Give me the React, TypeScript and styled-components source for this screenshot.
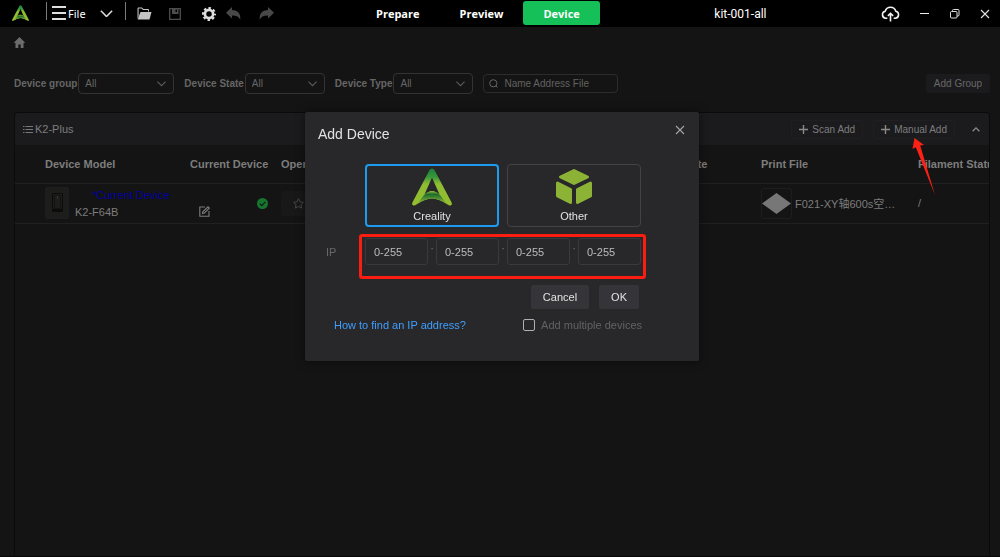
import React from "react";
import styled, { createGlobalStyle } from "styled-components";

const GlobalStyle = createGlobalStyle`
  * { box-sizing: border-box; }
  body {
    margin: 0;
    background: #141414;
    font-family: "Liberation Sans", "Noto Sans CJK SC", Arial, sans-serif;
    font-size: 11px;
    color: #7d7d7d;
  }
  button, input, select { font: inherit; color: inherit; }
  button { border: 0; padding: 0; background: none; cursor: pointer; }
  svg { display: block; flex: none; }
`;

const Page = styled.div`
  display: flex;
  flex-direction: column;
  min-height: 100vh;
  overflow: hidden;
  border-bottom: 1px solid #060606;
`;

/* ---------- title bar ---------- */

const TitleBar = styled.header`
  display: grid;
  grid-template-columns: 356px auto 1fr auto;
  align-items: center;
  height: 27px;
  background: #000;
  color: #fff;
`;

const ToolGroup = styled.div`
  display: flex;
  align-items: center;
  padding-left: 12px;
`;

const Separator = styled.span<{ $gap: number }>`
  width: 1px;
  height: 18px;
  margin: 0 0 6px ${(p) => p.$gap}px;
  background: #7a7a7a;
`;

const ToolButton = styled.button<{ $gap: number }>`
  display: flex;
  align-items: center;
  gap: 2px;
  margin-left: ${(p) => p.$gap}px;
  font-family: "Noto Sans", sans-serif;
  line-height: 16px;
`;

const Tabs = styled.nav`
  display: flex;
`;

const Tab = styled.button<{ $active?: boolean }>`
  height: 24px;
  padding: 0 20px;
  margin-bottom: 1px;
  border-radius: 3px;
  background: ${(p) => (p.$active ? "#15c059" : "transparent")};
  font-family: "Open Sans", sans-serif;
  font-size: 11px;
  font-weight: 700;
`;

const ProjectName = styled.div`
  text-align: center;
  font-family: Roboto, sans-serif;
  font-size: 12px;
`;

const WindowActions = styled.div`
  display: flex;
  align-items: center;
  gap: 20px;
  padding-right: 10px;
`;

/* ---------- filters ---------- */

const Main = styled.main`
  flex: 1;
  display: flex;
  flex-direction: column;
  padding: 10px 10px 0 14px;
`;

const HomeButton = styled.button`
  align-self: flex-start;
  height: 11px;
  color: #6c6c6c;
`;

const Filters = styled.div`
  display: flex;
  align-items: center;
  margin-top: 25px;
  height: 21px;
  font-size: 10px;
`;

const Field = styled.label`
  display: flex;
  align-items: center;
  gap: 1px;
  margin-right: 10px;
  font-weight: 700;
  color: #666;
  white-space: nowrap;
`;

const SelectBox = styled.span<{ $width: number }>`
  position: relative;
  width: ${(p) => p.$width}px;
  height: 21px;

  select {
    width: 100%;
    height: 100%;
    padding: 0 6px;
    appearance: none;
    border: 1px solid #333;
    border-radius: 4px;
    background: transparent;
    font-weight: 400;
  }
  svg {
    position: absolute;
    right: 8px;
    top: 8px;
    pointer-events: none;
  }
`;

const SearchBox = styled.label`
  display: flex;
  align-items: center;
  gap: 6px;
  width: 135px;
  height: 19px;
  padding: 0 5px;
  margin-right: auto;
  border: 1px solid #2c2c2c;
  border-radius: 4px;

  input {
    flex: 1;
    min-width: 0;
    padding: 0;
    border: 0;
    outline: 0;
    background: none;
  }
  input::placeholder { color: #626262; opacity: 1; }
`;

const AddGroupButton = styled.button`
  width: 64px;
  height: 19px;
  border-radius: 2px;
  background: #1b1b1d;
  color: #686868;
`;

/* ---------- device panel ---------- */

const Panel = styled.section`
  flex: 1;
  margin-top: 18px;
  border: 1px solid #0b0b0b;
  border-bottom: 0;
  border-radius: 4px 4px 0 0;
  overflow: hidden;
`;

const PanelHeader = styled.div`
  display: flex;
  align-items: center;
  height: 32px;
  padding: 0 9px 0 8px;
  background: #1b1b1d;
`;

const PanelTitle = styled.h2`
  display: flex;
  align-items: center;
  gap: 2px;
  margin: 0;
  font-size: 11px;
  font-weight: 400;
`;

const PanelActions = styled.div`
  display: flex;
  gap: 10px;
  margin: 0 17px 0 auto;
`;

const PanelButton = styled.button`
  position: relative;
  display: flex;
  align-items: center;
  justify-content: center;
  gap: 4px;
  height: 19px;
  padding: 0 7px;
  border: 1px solid #1f1f21;
  border-radius: 2px;
  font-size: 10px;
`;

const Arrow = styled.svg`
  position: absolute;
  left: 38px;
  top: 16px;
  z-index: 2;
  pointer-events: none;
`;

const DeviceTable = styled.table`
  width: 100%;
  min-width: 996px;
  table-layout: fixed;
  border-collapse: collapse;
  text-align: left;
  white-space: nowrap;

  th, td { padding: 0 8px 0 7px; border-bottom: 1px solid #202020; }
  th { height: 38px; font-weight: 700; }
  td { height: 40px; }
  th:first-child, td:first-child { padding-left: 30px; }
  th:nth-child(2), td:nth-child(2) { padding-right: 0; }
`;

const Cell = styled.div`
  display: flex;
  align-items: center;
  gap: 3px;
`;

const Thumb = styled.span<{ $wide?: boolean }>`
  display: grid;
  place-items: center;
  width: ${(p) => (p.$wide ? 31 : 24)}px;
  height: ${(p) => (p.$wide ? 31 : 32)}px;
  border: 1px solid #1e1e1e;
  border-radius: 2px;
  background: ${(p) => (p.$wide ? "transparent" : "#1d1d1c")};
`;

const DeviceNames = styled.div`
  display: flex;
  flex-direction: column;
  gap: 1px;
  padding-left: 3px;
  line-height: 16px;
`;

const CurrentTag = styled.span`
  padding-left: 17px;
  color: #0000a0;
`;

const StatusCell = styled.div`
  display: flex;
  align-items: center;
  justify-content: space-between;
  height: 32px;
  padding: 0 6px 0 9px;

  button { align-self: flex-end; margin-bottom: 2px; }
`;

const StarButton = styled.button`
  display: flex;
  align-items: center;
  width: 40px;
  height: 25px;
  padding-left: 12px;
  border-radius: 3px;
  background: #181818;
`;

/* ---------- dialog ---------- */

const Overlay = styled.div`
  position: fixed;
  inset: 0;
  display: flex;
  justify-content: center;
  align-items: flex-start;
  padding: 112px 0 0 4px;
  pointer-events: none;
`;

const Dialog = styled.section`
  width: 394px;
  padding: 11px 12px 28px 13px;
  border-radius: 2px;
  background: #28282a;
  box-shadow: 0 0 10px rgba(0, 0, 0, 0.5);
  color: #e2e2e2;
  pointer-events: auto;
`;

const DialogHeader = styled.div`
  display: flex;
  align-items: center;
  justify-content: space-between;
  height: 20px;

  h1 { margin: 0; padding-top: 2px; font-size: 14px; font-weight: 400; }
  button { padding: 0 2px 7px 0; }
`;

const Form = styled.form`
  display: grid;
  grid-template-columns: 39px 276px;
  row-gap: 11px;
  margin: 21px 0 0 8px;
`;

const Brands = styled.div`
  grid-column: 2;
  display: grid;
  grid-template-columns: 1fr 1fr;
  gap: 8px;
`;

const BrandCard = styled.button<{ $selected?: boolean }>`
  display: flex;
  flex-direction: column;
  align-items: center;
  gap: 2px;
  height: 63px;
  padding-top: ${(p) => (p.$selected ? 2 : 3)}px;
  border: ${(p) => (p.$selected ? "2px solid #1d9bf0" : "1px solid #434346")};
  border-radius: 4px;
  line-height: 16px;
`;

const IpLabel = styled.span`
  color: #68686a;
  line-height: 28px;
`;

const IpFields = styled.div`
  position: relative;
  display: grid;
  grid-template-columns: 1fr 8px 1fr 8px 1fr 8px 1fr;
  height: 27px;
  text-align: center;
  color: #77777a;
  line-height: 20px;

  input {
    width: 100%;
    height: 27px;
    padding: 0 8px;
    border: 1px solid #3a3a3d;
    border-radius: 3px;
    background: transparent;
  }
  input::placeholder { color: #bcbcbe; opacity: 1; }
`;

const Highlight = styled.div`
  position: absolute;
  inset: -4px -5px -14px -6px;
  border: 3px solid #fb1d10;
  border-radius: 3px;
  pointer-events: none;
`;

const Actions = styled.div`
  grid-column: 2;
  display: flex;
  justify-content: flex-end;
  gap: 10px;
  padding: 8px 2px 0 0;
`;

const ActionButton = styled.button`
  height: 24px;
  padding: 0 12px;
  border-radius: 2px;
  background: #353539;
`;

const DialogFooter = styled.div`
  display: flex;
  justify-content: space-between;
  align-items: center;
  height: 16px;
  margin: 8px 45px 0 16px;

  a { color: #409eff; text-decoration: none; }
`;

const CheckLabel = styled.label`
  display: flex;
  align-items: center;
  gap: 6px;
  color: #626265;

  input {
    appearance: none;
    width: 12px;
    height: 12px;
    margin: 0;
    border: 1px solid #b0b0b2;
    border-radius: 2px;
  }
`;

/* ---------- drawings ---------- */

const Logo = ({ size, id }: { size: number; id: string }) => (
  <svg width={size} height={(size * 38) / 40} viewBox="0 0 40 38" aria-hidden="true">
    <defs>
      <linearGradient id={id} x1="0" y1="0" x2="0" y2="1">
        <stop offset="0" stopColor="#1d7f3c" />
        <stop offset="0.22" stopColor="#35963a" />
        <stop offset="0.42" stopColor="#8fbd33" />
        <stop offset="1" stopColor="#95bd30" />
      </linearGradient>
      <linearGradient id={`${id}Base`} x1="0" y1="0" x2="0" y2="1">
        <stop offset="0" stopColor="#8fbd33" />
        <stop offset="0.25" stopColor="#1b6a2f" />
        <stop offset="1" stopColor="#86b733" />
      </linearGradient>
    </defs>
    <path
      fill={`url(#${id})`}
      fillRule="evenodd"
      d="M20 .5c1.200 0 2 .7 2.700 2L39.600 34.500c1 2.200-.8 3.700-2.800 2.800Q27 30.500 20 30.500T3.200 37.300C1.200 38.200-.6 36.700.4 34.500L17.300 2.500C18 1.200 18.800.5 20 .5zM20 9.500L12.500 26.500Q16.500 23 20 23T27.500 26.500z"
    />
    <path fill={`url(#${id}Base)`} d="M12 27Q16.500 23.200 20 23.200T28 27L34 35Q26 30.500 20 30.500T6 35z" />
  </svg>
);

const Cube = () => (
  <svg width="38" height="38" viewBox="0 0 38 38" fill="#8cb335" stroke="#8cb335" strokeWidth="3" strokeLinejoin="round" aria-hidden="true">
    <path d="M19 2.500L32.500 9 19 15.500 5.500 9z" />
    <path d="M2.500 15L15.500 21.500v13L2.500 28z" />
    <path d="M35.500 15L22.500 21.500v13L35.500 28z" />
  </svg>
);

const Chevron = ({ w = 9, color = "#5c5c5c", up }: { w?: number; color?: string; up?: boolean }) => (
  <svg width={w} height={w / 2 + 1} viewBox="0 0 10 6" fill="none" stroke={color} strokeWidth={up ? 1.6 : 1.2} aria-hidden="true">
    <path d={up ? "M.8 5.200L5 1l4.200 4.200" : "M.5.600L5 5.200 9.500.600"} />
  </svg>
);

const Plus = () => (
  <svg width="9" height="9" viewBox="0 0 9 9" stroke="#8a8a8a" strokeWidth="1.400" aria-hidden="true">
    <path d="M4.500 0v9M0 4.500h9" />
  </svg>
);

const Cross = ({ size, color }: { size: number; color: string }) => (
  <svg width={size} height={size} viewBox="0 0 10 10" stroke={color} strokeWidth="1.100" aria-hidden="true">
    <path d="M1 1l8 8M9 1L1 9" />
  </svg>
);

const UndoIcon = ({ flip }: { flip?: boolean }) => (
  <svg width="15" height="13" viewBox="0 0 15 13" fill="#484848" aria-hidden="true">
    <path
      transform={flip ? "translate(15 0) scale(-1 1)" : undefined}
      d="M6 0v3c5.800 0 8.800 3.500 8.300 9.800-1.300-3.200-3.800-4.500-8.300-4.400V11.500L0 5.700z"
    />
  </svg>
);

const FilterSelect = ({ label, width }: { label: string; width: number }) => (
  <Field>
    {label}
    <SelectBox $width={width}>
      <select>
        <option>All</option>
      </select>
      <Chevron />
    </SelectBox>
  </Field>
);

export default function App() {
  return (
    <Page>
      <GlobalStyle />
      <TitleBar>
        <ToolGroup>
          <Logo size={17} id="logoSmall" />
          <Separator $gap={17} />
          <ToolButton $gap={5}>
            <svg width="14" height="15" viewBox="0 0 14 15" stroke="#dedede" strokeWidth="2" aria-hidden="true">
              <path d="M0 1h14M0 7h14M0 13h14" />
            </svg>
            File
          </ToolButton>
          <ToolButton $gap={14} aria-label="More menus">
            <Chevron w={13} color="#e0e0e0" />
          </ToolButton>
          <Separator $gap={12} />
          <ToolButton $gap={11} aria-label="Open">
            <svg width="15" height="13" viewBox="0 0 15 13" fill="#c4c4c4" aria-hidden="true">
              <path d="M.5 12V1.500Q.5.500 1.500.500H5l1.500 1.500H11q1 0 1 1V4.500h-1V3H6L4.600 1.500h-3V9z" />
              <path d="M3.500 5H14.500L12.500 12.500H.6z" />
            </svg>
          </ToolButton>
          <ToolButton $gap={17} aria-label="Save">
            <svg width="12" height="12" viewBox="0 0 12 12" aria-hidden="true">
              <path fill="none" stroke="#4d4d4d" strokeWidth="1.300" d="M.7.700h10.600v10.600H.7z" />
              <path fill="#4d4d4d" fillRule="evenodd" d="M3 0h6.500v6H3zM6.500 1.500v2.500h1.500V1.500z" />
            </svg>
          </ToolButton>
          <ToolButton $gap={21} aria-label="Settings">
            <svg width="14" height="14" viewBox="0 0 14 14" aria-hidden="true">
              <circle cx="7" cy="7" r="4.100" fill="none" stroke="#dedede" strokeWidth="2.700" />
              <circle cx="7" cy="7" r="6" fill="none" stroke="#dedede" strokeWidth="2" strokeDasharray="2.500 2.212" strokeDashoffset="1.250" />
            </svg>
          </ToolButton>
          <ToolButton $gap={10} aria-label="Undo"><UndoIcon /></ToolButton>
          <ToolButton $gap={18} aria-label="Redo"><UndoIcon flip /></ToolButton>
        </ToolGroup>
        <Tabs>
          <Tab>Prepare</Tab>
          <Tab>Preview</Tab>
          <Tab $active>Device</Tab>
        </Tabs>
        <ProjectName>kit-001-all</ProjectName>
        <WindowActions>
          <button aria-label="Upload">
            <svg width="19" height="16" viewBox="0 0 18 15" fill="none" stroke="#f2f2f2" strokeWidth="1.500" aria-hidden="true">
              <path d="M6 11.500H4.500A3.400 3.400 0 0 1 4 4.800 5.200 5.200 0 0 1 14 4.800 3.400 3.400 0 0 1 13.500 11.500H12" />
              <path d="M9 14.500V7M6.500 9.300L9 6.800l2.500 2.500" />
            </svg>
          </button>
          <button aria-label="Minimize">
            <svg width="10" height="10" viewBox="0 0 10 10" stroke="#eee" aria-hidden="true"><path d="M0 4.500h9" /></svg>
          </button>
          <button aria-label="Restore">
            <svg width="10" height="10" viewBox="0 0 10 10" fill="none" stroke="#ddd" aria-hidden="true">
              <rect x=".5" y="2.500" width="6.500" height="6.500" rx="1" />
              <path d="M2.500 2.500V1.500q0-1 1-1h4.500q1 0 1 1V6q0 1-1 1H7" />
            </svg>
          </button>
          <button aria-label="Close"><Cross size={10} color="#e2e2e2" /></button>
        </WindowActions>
      </TitleBar>

      <Main>
        <HomeButton aria-label="Home">
          <svg width="11" height="11" viewBox="0 0 11 11" fill="currentColor" aria-hidden="true">
            <path d="M5.500 0L11 5.400l-.6.600H9.500V11H6.700V7.500H4.300V11H1.500V6H.600L0 5.400z" />
          </svg>
        </HomeButton>
        <Filters>
          <FilterSelect label="Device group" width={96} />
          <FilterSelect label="Device State" width={80} />
          <FilterSelect label="Device Type" width={80} />
          <SearchBox>
            <svg width="9" height="9" viewBox="0 0 9 9" fill="none" stroke="#656565" aria-hidden="true">
              <circle cx="4.300" cy="4.300" r="3.600" />
              <path d="M6.800 6.800L8.500 8.500" />
            </svg>
            <input aria-label="Search" placeholder="Name Address File" />
          </SearchBox>
          <AddGroupButton>Add Group</AddGroupButton>
        </Filters>

        <Panel>
          <PanelHeader>
            <PanelTitle>
              <svg width="10" height="9" viewBox="0 0 10 9" stroke="#777" aria-hidden="true">
                <path d="M0 1.500h1.500M2.500 1.500H10M0 4.500h1.500M2.500 4.500H10M0 7.500h1.500M2.500 7.500H10" />
              </svg>
              K2-Plus
            </PanelTitle>
            <PanelActions>
              <PanelButton><Plus />Scan Add</PanelButton>
              <PanelButton>
                <Plus />Manual Add
                <Arrow width="26" height="60" viewBox="0 0 26 60" aria-hidden="true">
                  <path fill="#fb2114" d="M2.500 1L12 8l-3.800.600L23 58 3.800 10.300 0.500 12z" />
                </Arrow>
              </PanelButton>
            </PanelActions>
            <button aria-label="Collapse"><Chevron w={8} color="#8a8a8a" up /></button>
          </PanelHeader>
          <DeviceTable>
            <colgroup>
              <col width="168" />
              <col width="91" />
              <col width="361" />
              <col width="119" />
              <col width="157" />
              <col />
            </colgroup>
            <thead>
              <tr>
                <th>Device Model</th>
                <th>Current Device</th>
                <th>Operation</th>
                <th>Device State</th>
                <th>Print File</th>
                <th>Filament Status</th>
              </tr>
            </thead>
            <tbody>
              <tr>
                <td>
                  <Cell>
                    <Thumb>
                      <svg width="11" height="20" viewBox="0 0 11 20" fill="none" stroke="#0c0c0c" aria-hidden="true">
                        <path d="M.5.500h10v18H.5z" />
                        <path d="M2.500 2.500h6v13h-6z" stroke="#131313" />
                        <path d="M1 17h9" strokeWidth="2" />
                        <path d="M5.500 3v2.500" stroke="#3a3a3a" />
                      </svg>
                    </Thumb>
                    <DeviceNames>
                      <CurrentTag>*Current Device</CurrentTag>
                      <span>K2-F64B</span>
                    </DeviceNames>
                  </Cell>
                </td>
                <td>
                  <StatusCell>
                    <button aria-label="Rename">
                      <svg width="11" height="11" viewBox="0 0 11 11" fill="none" stroke="#7c7c7c" strokeWidth="1.100" aria-hidden="true">
                        <path d="M6 1H.8v9.200H10V5" />
                        <path d="M3.500 7.500l.4-1.900L9 .8l1.300 1.300L5.400 7z" />
                      </svg>
                    </button>
                    <svg width="11" height="11" viewBox="0 0 11 11" aria-hidden="true">
                      <circle cx="5.500" cy="5.500" r="5.500" fill="#16762f" />
                      <path d="M2.800 5.600l2 2 3.600-3.800" fill="none" stroke="#161616" strokeWidth="1.200" />
                    </svg>
                  </StatusCell>
                </td>
                <td>
                  <StarButton aria-label="Favorite">
                    <svg width="11" height="11" viewBox="0 0 11 11" fill="none" stroke="#4c4c4c" strokeWidth="0.900" aria-hidden="true">
                      <path d="M5.500.700l1.500 3.100 3.400.500L8 6.700l.6 3.400-3.100-1.600-3.100 1.600L3 6.700.6 4.300 4 3.800z" />
                    </svg>
                  </StarButton>
                </td>
                <td>Idle</td>
                <td>
                  <Cell>
                    <Thumb $wide>
                      <svg width="29" height="21" viewBox="0 0 29 21" fill="#777" aria-hidden="true">
                        <path d="M14.500 0L29 10.500 14.500 21 0 10.500z" />
                      </svg>
                    </Thumb>
                    F021-XY轴600s空…
                  </Cell>
                </td>
                <td>/</td>
              </tr>
            </tbody>
          </DeviceTable>
        </Panel>
      </Main>

      <Overlay>
        <Dialog role="dialog" aria-labelledby="dialogTitle">
          <DialogHeader>
            <h1 id="dialogTitle">Add Device</h1>
            <button aria-label="Close dialog"><Cross size={10} color="#a4a4a6" /></button>
          </DialogHeader>
          <Form onSubmit={(e) => e.preventDefault()}>
            <Brands>
              <BrandCard type="button" $selected>
                <Logo size={40} id="logoLarge" />
                Creality
              </BrandCard>
              <BrandCard type="button">
                <Cube />
                Other
              </BrandCard>
            </Brands>
            <IpLabel>IP</IpLabel>
            <IpFields>
              <input aria-label="IP part 1" placeholder="0-255" />
              <span>·</span>
              <input aria-label="IP part 2" placeholder="0-255" />
              <span>·</span>
              <input aria-label="IP part 3" placeholder="0-255" />
              <span>·</span>
              <input aria-label="IP part 4" placeholder="0-255" />
              <Highlight />
            </IpFields>
            <Actions>
              <ActionButton type="button">Cancel</ActionButton>
              <ActionButton type="submit">OK</ActionButton>
            </Actions>
          </Form>
          <DialogFooter>
            <a href="#help">How to find an IP address?</a>
            <CheckLabel>
              <input type="checkbox" />
              Add multiple devices
            </CheckLabel>
          </DialogFooter>
        </Dialog>
      </Overlay>
    </Page>
  );
}
